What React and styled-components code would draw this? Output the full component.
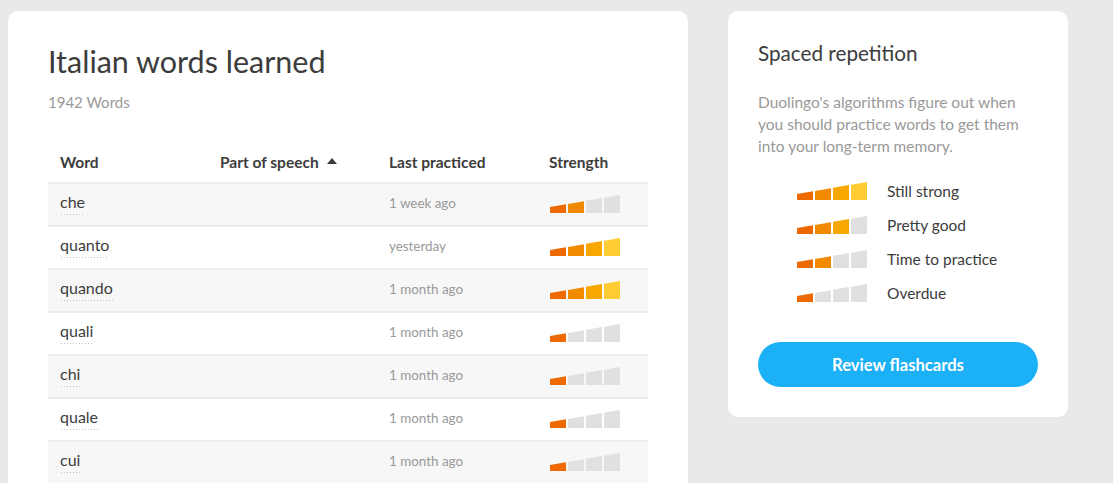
import React from 'react';
import styled, { createGlobalStyle } from 'styled-components';

const GlobalStyle = createGlobalStyle`
    html, body {
        margin: 0;
        padding: 0;
        background: #e9e9e9;
        font-family: Lato, "Open Sans", sans-serif;
        color: #3c3c3c;
    }
`;

const BAR_COLORS = ['#ee6a00', '#f28a00', '#f7a800', '#ffcd33'];
const EMPTY_BAR = '#e0e0e0';

const words = [
    { word: 'che', last: '1 week ago', strength: 2 },
    { word: 'quanto', last: 'yesterday', strength: 4 },
    { word: 'quando', last: '1 month ago', strength: 4 },
    { word: 'quali', last: '1 month ago', strength: 1 },
    { word: 'chi', last: '1 month ago', strength: 1 },
    { word: 'quale', last: '1 month ago', strength: 1 },
    { word: 'cui', last: '1 month ago', strength: 1 },
    { word: 'quella', last: '1 month ago', strength: 1 },
    { word: 'quello', last: '1 month ago', strength: 1 },
];

const legend = [
    { label: 'Still strong', strength: 4 },
    { label: 'Pretty good', strength: 3 },
    { label: 'Time to practice', strength: 2 },
    { label: 'Overdue', strength: 1 },
];

const Page = styled.div`
    display: flex;
    align-items: flex-start;
    gap: 40px;
    padding: 11px 8px 0;
`;

const Card = styled.section`
    background: #fff;
    border-radius: 10px;
    box-sizing: border-box;
`;

const WordsCard = styled(Card)`
    width: 680px;
    padding: 32px 40px 40px;
`;

const SideCard = styled(Card)`
    width: 340px;
    padding: 30px 30px 30px;
`;

const Title = styled.h1`
    margin: 0;
    font-size: 30.5px;
    line-height: 36px;
    font-weight: 400;
`;

const Count = styled.div`
    margin-top: 13px;
    font-size: 15px;
    line-height: 20px;
    color: #999;
`;

const Table = styled.div`
    margin-top: 29px;
`;

const Row = styled.div`
    display: grid;
    grid-template-columns: 160px 169px 160px 1fr;
    align-items: center;
    box-sizing: border-box;
    height: 43px;
    padding-bottom: ${(p) => (p.$head ? '0' : '4px')};
    border-bottom: 2px solid #ececec;
    background: ${(p) => (p.$shaded ? '#f7f7f7' : '#fff')};
`;

const HeadCell = styled.div`
    padding-left: 12px;
    font-size: 15.5px;
    font-weight: 700;
    display: flex;
    align-items: center;
    gap: 8px;
`;

const SortArrow = styled.span`
    width: 0;
    height: 0;
    border-left: 5px solid transparent;
    border-right: 5px solid transparent;
    border-bottom: 6px solid #3c3c3c;
    margin-top: -2px;
`;

const Cell = styled.div`
    padding-left: 12px;
    display: flex;
    align-items: center;
`;

const BarsCell = styled(Cell)`
    padding-left: 13px;
    padding-top: 2px;
`;

const Word = styled.span`
    display: inline-block;
    font-size: 16px;
    line-height: 18px;
    padding-bottom: 5px;
    margin-top: 3px;
    background-image: radial-gradient(circle, #c2c2c2 0.7px, transparent 0.9px);
    background-size: 3px 3px;
    background-position: 0 100%;
    background-repeat: repeat-x;
`;

const When = styled.span`
    font-size: 13.4px;
    color: #999;
`;

const SideTitle = styled.h2`
    margin: 0;
    font-size: 20.7px;
    line-height: 24px;
    font-weight: 400;
`;

const Description = styled.p`
    margin: 26px 0 0;
    font-size: 15.5px;
    line-height: 22px;
    color: #999;
`;

const Legend = styled.div`
    margin: 17px 0 0;
    padding-left: 39px;
`;

const LegendRow = styled.div`
    display: flex;
    align-items: center;
    gap: 20px;
    height: 34px;
    font-size: 15.5px;
`;

const ReviewButton = styled.button`
    display: block;
    width: 100%;
    height: 45px;
    margin-top: 32px;
    border: none;
    border-radius: 23px;
    background: #1cb0f6;
    color: #fff;
    font-family: inherit;
    font-size: 16.6px;
    font-weight: 700;
    cursor: pointer;
`;

const StrengthBars = ({ level }) => (
    <svg width="70" height="18" viewBox="0 0 70 18">
        {[0, 1, 2, 3].map((i) => {
            const x0 = i * 18;
            const x1 = x0 + 16;
            const top = (x) => 12 - (x * 12) / 70;
            return (
                <polygon
                    key={i}
                    points={`${x0},18 ${x1},18 ${x1},${top(x1)} ${x0},${top(x0)}`}
                    fill={i < level ? BAR_COLORS[i] : EMPTY_BAR}
                />
            );
        })}
    </svg>
);

const App = () => (
    <>
        <GlobalStyle />
        <Page>
            <WordsCard>
                <Title>Italian words learned</Title>
                <Count>1942 Words</Count>
                <Table>
                    <Row $head>
                        <HeadCell>Word</HeadCell>
                        <HeadCell>
                            Part of speech <SortArrow />
                        </HeadCell>
                        <HeadCell>Last practiced</HeadCell>
                        <HeadCell>Strength</HeadCell>
                    </Row>
                    {words.map((w, i) => (
                        <Row key={w.word} $shaded={i % 2 === 0}>
                            <Cell>
                                <Word>{w.word}</Word>
                            </Cell>
                            <Cell />
                            <Cell>
                                <When>{w.last}</When>
                            </Cell>
                            <BarsCell>
                                <StrengthBars level={w.strength} />
                            </BarsCell>
                        </Row>
                    ))}
                </Table>
            </WordsCard>
            <SideCard>
                <SideTitle>Spaced repetition</SideTitle>
                <Description>
                    Duolingo's algorithms figure out when you should practice words to get them into your
                    long-term memory.
                </Description>
                <Legend>
                    {legend.map((l) => (
                        <LegendRow key={l.label}>
                            <StrengthBars level={l.strength} />
                            {l.label}
                        </LegendRow>
                    ))}
                </Legend>
                <ReviewButton>Review flashcards</ReviewButton>
            </SideCard>
        </Page>
    </>
);

export default App;
